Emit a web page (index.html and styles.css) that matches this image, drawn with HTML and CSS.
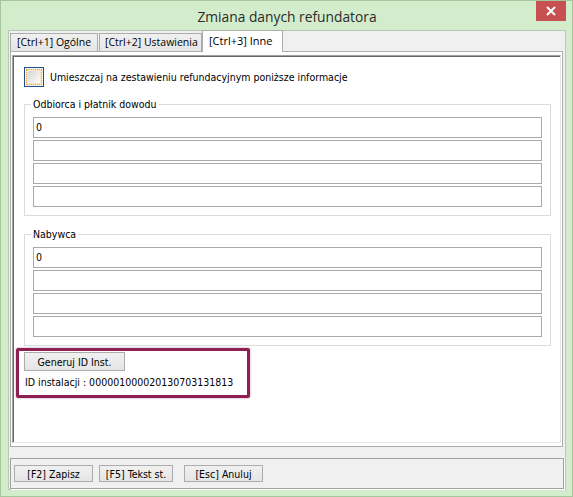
FILE: index.html
```html
<!DOCTYPE html>
<html lang="pl">
<head>
<meta charset="utf-8">
<title>Zmiana danych refundatora</title>
<link rel="stylesheet" href="styles.css">
</head>
<body>
<div class="window">
  <div class="titlebar">
    <span class="title">Zmiana danych refundatora</span>
    <div class="close">
      <svg width="10" height="10" viewBox="0 0 10 10"><path d="M1 1 L9 9 M9 1 L1 9" stroke="#fff" stroke-width="2" fill="none"/></svg>
    </div>
  </div>
  <div class="client">
    <div class="tabs">
      <div class="tab t1">[Ctrl+1] Ogólne</div>
      <div class="tab t2">[Ctrl+2] Ustawienia</div>
      <div class="tab t3 active">[Ctrl+3] Inne</div>
    </div>
    <div class="page">
      <div class="panel">
        <div class="check">
          <span class="box"><span class="focus"><span class="fill"></span></span></span>
          <span class="check-label">Umieszczaj na zestawieniu refundacyjnym poniższe informacje</span>
        </div>
        <fieldset class="group g1">
          <legend>Odbiorca i płatnik dowodu</legend>
          <div class="input">0</div>
          <div class="input"></div>
          <div class="input"></div>
          <div class="input"></div>
        </fieldset>
        <fieldset class="group g2">
          <legend>Nabywca</legend>
          <div class="input">0</div>
          <div class="input"></div>
          <div class="input"></div>
          <div class="input"></div>
        </fieldset>
        <div class="highlight">
          <div class="btn gen">Generuj ID Inst.</div>
          <div class="idtext">ID instalacji : 000001000020130703131813</div>
        </div>
      </div>
    </div>
    <div class="bottombar">
      <div class="btn b1">[F2] Zapisz</div>
      <div class="btn b2">[F5] Tekst st.</div>
      <div class="btn b3">[Esc] Anuluj</div>
    </div>
  </div>
</div>
</body>
</html>
```
FILE: styles.css
```css
* { box-sizing: border-box; }
html, body { margin: 0; padding: 0; }
body { width: 573px; height: 497px; overflow: hidden; background: #d3edcc; }

.window {
  width: 573px;
  height: 497px;
  background: #d3edcc;
  border: 1px solid #a3c69b;
  display: flex;
  flex-direction: column;
  padding: 0 6px 6px 7px;
}

.titlebar {
  height: 29px;
  position: relative;
  display: flex;
  align-items: center;
  justify-content: center;
}
.title {
  font-family: "Open Sans", "Noto Sans", sans-serif;
  font-size: 13.8px;
  color: #2b2b2b;
  margin-top: 2px;
}
.close {
  position: absolute;
  top: 0;
  right: 0;
  width: 30px;
  height: 20px;
  background: #c75050;
  display: flex;
  align-items: center;
  justify-content: center;
}

.client {
  flex: 1;
  background: #f0f0f0;
  border: 1px solid #b6cbb2;
  display: flex;
  flex-direction: column;
  font-family: "DejaVu Sans Condensed", "DejaVu Sans", sans-serif;
  font-size: 10.5px;
  color: #000;
}

.tabs {
  display: flex;
  align-items: flex-end;
  height: 20px;
  padding-left: 1px;
  position: relative;
  z-index: 1;
  font-family: "Open Sans", "Noto Sans", sans-serif;
  font-size: 10.5px;
}
.tab {
  height: 18px;
  border: 1px solid #acacac;
  border-bottom: none;
  background: linear-gradient(#f0f0f0, #e5e5e5);
  padding-left: 6px;
  line-height: 17px;
  white-space: nowrap;
  color: #000;
}
.t1 { width: 88px; }
.t2 { width: 103px; margin-left: 1px; padding-left: 5px; }
.t3 { width: 81px; }
.tab.active {
  height: 22px;
  margin-bottom: -1px;
  background: #fff;
  border-color: #acacac;
  line-height: 19px;
  padding-left: 6px;
  font-size: 11px;
}

.page {
  margin-left: 1px;
  width: 553px;
  height: 396px;
  background: #fff;
  border: 1px solid #adadad;
  padding: 3px 1px 3px 1px;
}
.panel {
  height: 100%;
  border-top: 1px solid #a0a0a0;
  border-left: 1px solid #a0a0a0;
  border-right: 1px solid #e3e3e3;
  border-bottom: 1px solid #e3e3e3;
  box-shadow: inset 1px 1px 0 #696969;
  padding: 0 0 0 11px;
  display: flex;
  flex-direction: column;
}

.check {
  display: flex;
  align-items: center;
  height: 20px;
  margin-top: 11px;
}
.box {
  width: 20px;
  height: 20px;
  border: 1px solid #1e4f8c;
  padding: 1px;
  background: #f4f4f4;
}
.focus {
  display: block;
  width: 100%;
  height: 100%;
  border: 1px dotted #f0a23a;
  padding: 1px;
  background: #fbe6c0;
}
.fill {
  display: block;
  width: 100%;
  height: 100%;
  background: linear-gradient(135deg, #d6d6d6, #fdfdfd);
}
.check-label {
  margin-left: 6px;
}

.group {
  margin: 0;
  width: 527px;
  border: 1px solid #dcdcdc;
  padding: 6px 8px 8px 8px;
  display: flex;
  flex-direction: column;
  gap: 2px;
}
.g1 { margin-top: 10px; }
.g2 { margin-top: 11px; }
.group legend {
  padding: 0 2px;
  margin-left: -2px;
  line-height: 14px;
  color: #000;
}
.input {
  height: 21px;
  width: 509px;
  border: 1px solid #aaaaaa;
  background: #fff;
  padding-left: 2px;
  line-height: 19px;
}

.highlight {
  width: 234px;
  margin-left: -8px;
  margin-top: 2px;
  border: 3px solid #8e1f52;
  border-radius: 2px;
  box-shadow: 0 0 2px rgba(142, 31, 82, 0.6);
  padding: 1px 6px 6px 5px;
}
.btn {
  height: 19px;
  border: 1px solid #acacac;
  background: linear-gradient(#f0f0f0, #e5e5e5);
  display: flex;
  align-items: center;
  justify-content: center;
  white-space: nowrap;
}
.gen { width: 101px; }
.idtext {
  margin-top: 4px;
  margin-left: 1px;
  line-height: 14px;
  white-space: nowrap;
}

.bottombar {
  margin-top: 11px;
  margin-left: 1px;
  width: 554px;
  height: 31px;
  border: 1px solid #a0a0a0;
  box-shadow: 1px 1px 0 #fff;
  display: flex;
  padding: 6px 0 0 3px;
}
.bottombar .btn { height: 17px; }
.b1 { width: 79px; }
.b2 { width: 74px; margin-left: 6px; }
.b3 { width: 79px; margin-left: 11px; }
```
